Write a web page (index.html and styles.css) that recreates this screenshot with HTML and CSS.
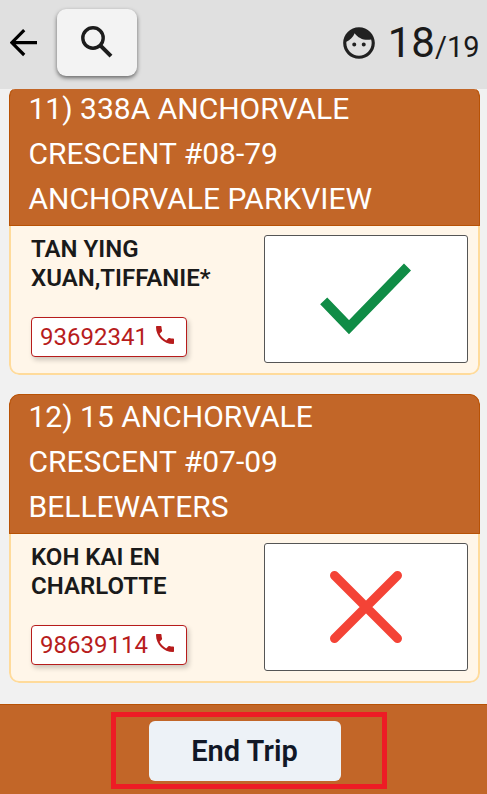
FILE: index.html
```html
<!DOCTYPE html>
<html lang="en">
<head>
<meta charset="utf-8">
<title>Trip</title>
<link rel="stylesheet" href="styles.css">
</head>
<body>
<header class="topbar">
  <svg class="back" width="28" height="28" viewBox="0 0 28 28"><path d="M27 13.600H2M14.200 1.200 1.800 13.600 14.200 26" fill="none" stroke="#000" stroke-width="3.200"/></svg>
  <button class="search" aria-label="Search"><svg width="32" height="32" viewBox="0 0 32 32"><g fill="none" stroke="#1c1c1c"><circle cx="12" cy="12" r="10.200" stroke-width="3.400"/><path d="M20 20.200 30 30.200" stroke-width="4"/></g></svg></button>
  <div class="counter">
    <svg class="face" width="38" height="38" viewBox="0 0 24 24" fill="#212121"><path d="M9 11.750c-.69 0-1.250.56-1.250 1.250s.56 1.250 1.250 1.250 1.250-.56 1.250-1.250-.56-1.250-1.250-1.250zm6 0c-.69 0-1.250.56-1.250 1.250s.56 1.250 1.250 1.250 1.250-.56 1.250-1.250-.56-1.250-1.250-1.250zM12 2C6.480 2 2 6.480 2 12s4.480 10 10 10 10-4.480 10-10S17.520 2 12 2zm0 18c-4.410 0-8-3.590-8-8 0-.29.02-.58.05-.86 2.360-1.050 4.230-2.980 5.210-5.370C11.070 8.330 14.050 10 17.420 10c.78 0 1.530-.09 2.250-.26.21.71.33 1.470.33 2.260 0 4.410-3.590 8-8 8z"/></svg>
    <span class="count">18</span><span class="total">/19</span>
  </div>
</header>
<main class="stops">
  <section class="card">
    <h2 class="address">11) 338A ANCHORVALE<br>CRESCENT #08-79<br>ANCHORVALE PARKVIEW</h2>
    <div class="body">
      <div class="person">
        <div class="name">TAN YING<br>XUAN,TIFFANIE*</div>
        <a class="phone"><span>93692341</span><svg width="24" height="24" viewBox="0 0 24 24" fill="#b71c1c"><path d="M6.620 10.790c1.440 2.830 3.760 5.140 6.590 6.590l2.200-2.200c.27-.27.67-.36 1.020-.24 1.120.37 2.330.57 3.570.57.55 0 1 .45 1 1V20c0 .55-.45 1-1 1-9.390 0-17-7.610-17-17 0-.55.45-1 1-1h3.500c.55 0 1 .45 1 1 0 1.250.2 2.450.57 3.570.11.35.03.74-.25 1.020l-2.200 2.200z"/></svg></a>
      </div>
      <div class="status"><svg width="92" height="72" viewBox="0 0 92 72"><path d="M3.700 37.800 29 64.200 87.500 4" fill="none" stroke="#108c46" stroke-width="9.800"/></svg></div>
    </div>
  </section>
  <section class="card">
    <h2 class="address">12) 15 ANCHORVALE<br>CRESCENT #07-09<br>BELLEWATERS</h2>
    <div class="body">
      <div class="person">
        <div class="name">KOH KAI EN<br>CHARLOTTE</div>
        <a class="phone"><span>98639114</span><svg width="24" height="24" viewBox="0 0 24 24" fill="#b71c1c"><path d="M6.620 10.790c1.440 2.830 3.760 5.140 6.590 6.590l2.200-2.200c.27-.27.67-.36 1.020-.24 1.120.37 2.330.57 3.570.57.55 0 1 .45 1 1V20c0 .55-.45 1-1 1-9.390 0-17-7.610-17-17 0-.55.45-1 1-1h3.500c.55 0 1 .45 1 1 0 1.250.2 2.450.57 3.570.11.35.03.74-.25 1.020l-2.200 2.200z"/></svg></a>
      </div>
      <div class="status"><svg width="72" height="72" viewBox="0 0 72 72"><path d="M4.500 4.500 67.500 67.500M67.500 4.500 4.500 67.500" fill="none" stroke="#f44336" stroke-width="9" stroke-linecap="round"/></svg></div>
    </div>
  </section>
</main>
<footer class="bottombar">
  <div class="highlight"><button class="end">End Trip</button></div>
</footer>
</body>
</html>
```
FILE: styles.css
```css
* { box-sizing: border-box; }
body {
  margin: 0;
  height: 794px;
  display: flex;
  flex-direction: column;
  overflow: hidden;
  background: #f1f1f1;
  font-family: Roboto, "Liberation Sans", sans-serif;
  color: #1a1a1a;
}
.topbar {
  height: 89px;
  flex: none;
  display: flex;
  align-items: center;
  padding: 0 7.5px 4px 10px;
  background: #e0e0e0;
}
.search {
  width: 80px;
  height: 67px;
  margin-left: 19px;
  padding: 0 1px 1px 0;
  display: flex;
  align-items: center;
  justify-content: center;
  border: 0;
  border-radius: 9px;
  background: #f3f3f3;
  box-shadow: 0 2px 4px rgba(0, 0, 0, .55);
}
.counter {
  margin-left: auto;
  display: flex;
  align-items: baseline;
}
.face { align-self: center; margin-right: 10px; }
.count { font-size: 42px; line-height: 50px; }
.total { font-size: 29px; }
.stops {
  height: 615px;
  flex: none;
  overflow: hidden;
  padding: 0 7px 0 9px;
}
.card {
  height: 289px;
  margin-bottom: 19px;
  border-radius: 10px;
  overflow: hidden;
}
.card:first-child {
  height: 286px;
  border-radius: 6px 6px 10px 10px;
}
.address {
  height: 140px;
  margin: 0;
  padding: 0 18.5px;
  border: 1px solid #b85205;
  border-top-width: 0;
  border-radius: 10px 10px 0 0;
  background: #c26628;
  color: #fff;
  font-size: 30px;
  line-height: 45px;
  font-weight: 400;
  box-shadow: inset 0 1px #b85205;
}
.card:first-child .address { margin-top: -3px; }
.body {
  height: 149px;
  display: flex;
  justify-content: space-between;
  padding: 9px 10px 0 20px;
  border: 2px solid #ffdb9b;
  border-top: 0;
  border-radius: 0 0 10px 10px;
  background: #fff6e9;
}
.name { font-size: 24px; line-height: 29px; font-weight: 600; white-space: nowrap; }
.phone {
  width: 156px;
  height: 40px;
  margin-top: 24px;
  padding: 0 9px 0 8px;
  display: flex;
  align-items: center;
  justify-content: space-between;
  border: 1px solid #b71c1c;
  border-radius: 4px;
  background: #fff;
  color: #b71c1c;
  font-size: 24px;
  box-shadow: 2px 3px 5px rgba(0, 0, 0, .2);
}
.phone svg { margin-bottom: 4px; }
.status {
  width: 204px;
  height: 128px;
  display: flex;
  align-items: center;
  justify-content: center;
  border: 1px solid #555;
  border-radius: 3px;
  background: #fff;
}
.bottombar {
  height: 90px;
  flex: none;
  padding: 7px 0 0 111px;
  border-top: 1px solid #b85205;
  background: #c26628;
}
.highlight {
  width: 276px;
  height: 77px;
  display: flex;
  padding: 4px 0 0 33px;
  border: 5px solid #ee1c25;
}
.end {
  width: 192px;
  height: 60px;
  padding: 0 1px 0 0;
  border: 0;
  border-radius: 6px;
  background: #edf2f7;
  color: #111827;
  font: 600 29px Roboto, "Liberation Sans", sans-serif;
}
```
